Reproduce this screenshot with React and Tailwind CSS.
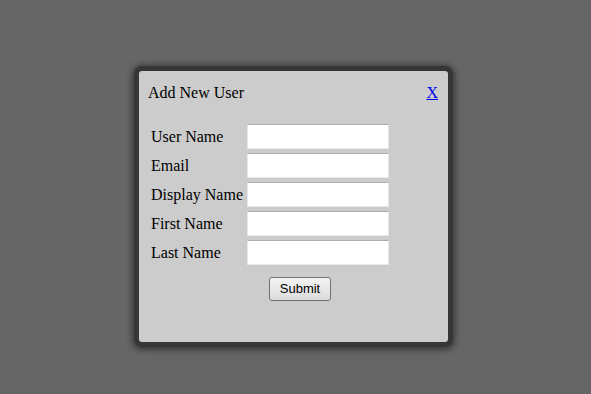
const fields = ['User Name', 'Email', 'Display Name', 'First Name', 'Last Name'];

export default function App() {
  return (
    <div className="w-[591px] h-[394px] bg-[#666666] pt-[66px] pl-[134px] font-['Liberation_Serif',serif] text-black">
      <div className="w-[319px] h-[281px] rounded-[8px] border-[5px] border-[#363636] bg-[#cccccc] shadow-[0_1px_6px_2px_rgba(0,0,0,0.45)]">
        <div className="flex items-center justify-between pt-[13px] pl-[9px] pr-[10px] text-[16px] leading-[18px]">
          <span>Add New User</span>
          <a href="#" className="text-[#0000ee] underline">X</a>
        </div>
        <div className="mt-[22px] ml-[12px] grid grid-cols-[96px_142px] gap-y-[4px] text-[16px]">
          {fields.map((f) => (
            <div key={f} className="contents">
              <label className="flex items-center h-[25px] whitespace-nowrap">{f}</label>
              <input
                type="text"
                className="h-[25px] w-[142px] bg-white border border-[#e3e9ef] border-t-[#abadb3] outline-none"
              />
            </div>
          ))}
        </div>
        <div className="mt-[11px] pl-[130px]">
          <button className="h-[24px] w-[62px] rounded-[3px] border border-[#707070] bg-gradient-to-b from-[#f4f4f4] to-[#dcdcdc] font-['Liberation_Sans',sans-serif] text-[13px] text-black">
            Submit
          </button>
        </div>
      </div>
    </div>
  );
}
